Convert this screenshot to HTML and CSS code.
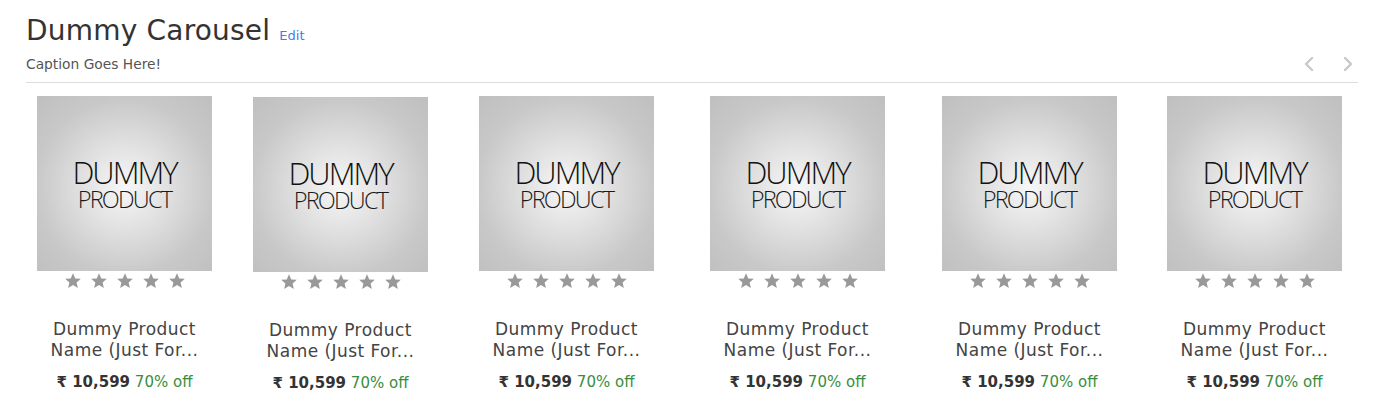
FILE: index.html
```html
<!DOCTYPE html>
<html>
<head>
<meta charset="utf-8">
<link rel="stylesheet" href="styles.css">
</head>
<body>
<section class="carousel">
  <header class="head">
    <div class="titles">
      <h2 class="title">Dummy Carousel <a class="edit" href="#">Edit</a></h2>
      <p class="caption">Caption Goes Here!</p>
    </div>
    <div class="nav">
      <svg class="arrow" viewBox="0 0 12 16" width="12" height="16"><path d="M9 2 L3 8 L9 14" fill="none" stroke="#c8c8c8" stroke-width="2.4" stroke-linecap="round" stroke-linejoin="round"/></svg>
      <svg class="arrow" viewBox="0 0 12 16" width="12" height="16"><path d="M3 2 L9 8 L3 14" fill="none" stroke="#c8c8c8" stroke-width="2.4" stroke-linecap="round" stroke-linejoin="round"/></svg>
    </div>
  </header>
  <div class="track">
    <div class="card">
      <div class="img"><p class="logo">DUMMY PRODUCT</p></div>
      <div class="stars"><svg viewBox="0 0 24 24"><path d="M12 1.5l3 7 7.4.6-5.6 4.9 1.7 7.3L12 17.4l-6.5 3.9 1.7-7.3L1.6 9.1 9 8.5z"/></svg><svg viewBox="0 0 24 24"><path d="M12 1.5l3 7 7.4.6-5.6 4.9 1.7 7.3L12 17.4l-6.5 3.9 1.7-7.3L1.6 9.1 9 8.5z"/></svg><svg viewBox="0 0 24 24"><path d="M12 1.5l3 7 7.4.6-5.6 4.9 1.7 7.3L12 17.4l-6.5 3.9 1.7-7.3L1.6 9.1 9 8.5z"/></svg><svg viewBox="0 0 24 24"><path d="M12 1.5l3 7 7.4.6-5.6 4.9 1.7 7.3L12 17.4l-6.5 3.9 1.7-7.3L1.6 9.1 9 8.5z"/></svg><svg viewBox="0 0 24 24"><path d="M12 1.5l3 7 7.4.6-5.6 4.9 1.7 7.3L12 17.4l-6.5 3.9 1.7-7.3L1.6 9.1 9 8.5z"/></svg></div>
      <p class="name">Dummy Product<br>Name (Just For...</p>
      <p class="price"><b>₹ 10,599</b> <span class="off">70% off</span></p>
    </div>
    <div class="card low">
      <div class="img"><p class="logo">DUMMY PRODUCT</p></div>
      <div class="stars"><svg viewBox="0 0 24 24"><path d="M12 1.5l3 7 7.4.6-5.6 4.9 1.7 7.3L12 17.4l-6.5 3.9 1.7-7.3L1.6 9.1 9 8.5z"/></svg><svg viewBox="0 0 24 24"><path d="M12 1.5l3 7 7.4.6-5.6 4.9 1.7 7.3L12 17.4l-6.5 3.9 1.7-7.3L1.6 9.1 9 8.5z"/></svg><svg viewBox="0 0 24 24"><path d="M12 1.5l3 7 7.4.6-5.6 4.9 1.7 7.3L12 17.4l-6.5 3.9 1.7-7.3L1.6 9.1 9 8.5z"/></svg><svg viewBox="0 0 24 24"><path d="M12 1.5l3 7 7.4.6-5.6 4.9 1.7 7.3L12 17.4l-6.5 3.9 1.7-7.3L1.6 9.1 9 8.5z"/></svg><svg viewBox="0 0 24 24"><path d="M12 1.5l3 7 7.4.6-5.6 4.9 1.7 7.3L12 17.4l-6.5 3.9 1.7-7.3L1.6 9.1 9 8.5z"/></svg></div>
      <p class="name">Dummy Product<br>Name (Just For...</p>
      <p class="price"><b>₹ 10,599</b> <span class="off">70% off</span></p>
    </div>
    <div class="card">
      <div class="img"><p class="logo">DUMMY PRODUCT</p></div>
      <div class="stars"><svg viewBox="0 0 24 24"><path d="M12 1.5l3 7 7.4.6-5.6 4.9 1.7 7.3L12 17.4l-6.5 3.9 1.7-7.3L1.6 9.1 9 8.5z"/></svg><svg viewBox="0 0 24 24"><path d="M12 1.5l3 7 7.4.6-5.6 4.9 1.7 7.3L12 17.4l-6.5 3.9 1.7-7.3L1.6 9.1 9 8.5z"/></svg><svg viewBox="0 0 24 24"><path d="M12 1.5l3 7 7.4.6-5.6 4.9 1.7 7.3L12 17.4l-6.5 3.9 1.7-7.3L1.6 9.1 9 8.5z"/></svg><svg viewBox="0 0 24 24"><path d="M12 1.5l3 7 7.4.6-5.6 4.9 1.7 7.3L12 17.4l-6.5 3.9 1.7-7.3L1.6 9.1 9 8.5z"/></svg><svg viewBox="0 0 24 24"><path d="M12 1.5l3 7 7.4.6-5.6 4.9 1.7 7.3L12 17.4l-6.5 3.9 1.7-7.3L1.6 9.1 9 8.5z"/></svg></div>
      <p class="name">Dummy Product<br>Name (Just For...</p>
      <p class="price"><b>₹ 10,599</b> <span class="off">70% off</span></p>
    </div>
    <div class="card">
      <div class="img"><p class="logo">DUMMY PRODUCT</p></div>
      <div class="stars"><svg viewBox="0 0 24 24"><path d="M12 1.5l3 7 7.4.6-5.6 4.9 1.7 7.3L12 17.4l-6.5 3.9 1.7-7.3L1.6 9.1 9 8.5z"/></svg><svg viewBox="0 0 24 24"><path d="M12 1.5l3 7 7.4.6-5.6 4.9 1.7 7.3L12 17.4l-6.5 3.9 1.7-7.3L1.6 9.1 9 8.5z"/></svg><svg viewBox="0 0 24 24"><path d="M12 1.5l3 7 7.4.6-5.6 4.9 1.7 7.3L12 17.4l-6.5 3.9 1.7-7.3L1.6 9.1 9 8.5z"/></svg><svg viewBox="0 0 24 24"><path d="M12 1.5l3 7 7.4.6-5.6 4.9 1.7 7.3L12 17.4l-6.5 3.9 1.7-7.3L1.6 9.1 9 8.5z"/></svg><svg viewBox="0 0 24 24"><path d="M12 1.5l3 7 7.4.6-5.6 4.9 1.7 7.3L12 17.4l-6.5 3.9 1.7-7.3L1.6 9.1 9 8.5z"/></svg></div>
      <p class="name">Dummy Product<br>Name (Just For...</p>
      <p class="price"><b>₹ 10,599</b> <span class="off">70% off</span></p>
    </div>
    <div class="card">
      <div class="img"><p class="logo">DUMMY PRODUCT</p></div>
      <div class="stars"><svg viewBox="0 0 24 24"><path d="M12 1.5l3 7 7.4.6-5.6 4.9 1.7 7.3L12 17.4l-6.5 3.9 1.7-7.3L1.6 9.1 9 8.5z"/></svg><svg viewBox="0 0 24 24"><path d="M12 1.5l3 7 7.4.6-5.6 4.9 1.7 7.3L12 17.4l-6.5 3.9 1.7-7.3L1.6 9.1 9 8.5z"/></svg><svg viewBox="0 0 24 24"><path d="M12 1.5l3 7 7.4.6-5.6 4.9 1.7 7.3L12 17.4l-6.5 3.9 1.7-7.3L1.6 9.1 9 8.5z"/></svg><svg viewBox="0 0 24 24"><path d="M12 1.5l3 7 7.4.6-5.6 4.9 1.7 7.3L12 17.4l-6.5 3.9 1.7-7.3L1.6 9.1 9 8.5z"/></svg><svg viewBox="0 0 24 24"><path d="M12 1.5l3 7 7.4.6-5.6 4.9 1.7 7.3L12 17.4l-6.5 3.9 1.7-7.3L1.6 9.1 9 8.5z"/></svg></div>
      <p class="name">Dummy Product<br>Name (Just For...</p>
      <p class="price"><b>₹ 10,599</b> <span class="off">70% off</span></p>
    </div>
    <div class="card">
      <div class="img"><p class="logo">DUMMY PRODUCT</p></div>
      <div class="stars"><svg viewBox="0 0 24 24"><path d="M12 1.5l3 7 7.4.6-5.6 4.9 1.7 7.3L12 17.4l-6.5 3.9 1.7-7.3L1.6 9.1 9 8.5z"/></svg><svg viewBox="0 0 24 24"><path d="M12 1.5l3 7 7.4.6-5.6 4.9 1.7 7.3L12 17.4l-6.5 3.9 1.7-7.3L1.6 9.1 9 8.5z"/></svg><svg viewBox="0 0 24 24"><path d="M12 1.5l3 7 7.4.6-5.6 4.9 1.7 7.3L12 17.4l-6.5 3.9 1.7-7.3L1.6 9.1 9 8.5z"/></svg><svg viewBox="0 0 24 24"><path d="M12 1.5l3 7 7.4.6-5.6 4.9 1.7 7.3L12 17.4l-6.5 3.9 1.7-7.3L1.6 9.1 9 8.5z"/></svg><svg viewBox="0 0 24 24"><path d="M12 1.5l3 7 7.4.6-5.6 4.9 1.7 7.3L12 17.4l-6.5 3.9 1.7-7.3L1.6 9.1 9 8.5z"/></svg></div>
      <p class="name">Dummy Product<br>Name (Just For...</p>
      <p class="price"><b>₹ 10,599</b> <span class="off">70% off</span></p>
    </div>
  </div>
</section>
</body>
</html>
```
FILE: styles.css
```css
* { box-sizing: border-box; }
html, body { margin: 0; padding: 0; background: #fff; }
body { font-family: "DejaVu Sans", "Noto Sans", sans-serif; color: #333; }

.carousel { padding: 13px 27px 0 26px; }

.head {
  display: flex;
  justify-content: space-between;
  align-items: flex-end;
  border-bottom: 1px solid #dcdcdc;
  padding-bottom: 9px;
}
.title {
  margin: 0;
  font-weight: 400;
  font-size: 28px;
  line-height: 35px;
  color: #333;
  letter-spacing: 0.2px;
}
.edit {
  font-size: 13px;
  color: #3b7ef0;
  text-decoration: none;
  letter-spacing: 0;
}
.caption {
  margin: 3px 0 0;
  font-size: 13.8px;
  line-height: 17px;
  color: #555;
}
.nav { display: flex; gap: 27px; padding-right: 4px; padding-bottom: 1px; }
.arrow { display: block; }

.track {
  display: grid;
  grid-template-columns: 216px 226px 231px 232px 225px 175px;
  padding: 13px 0 0 11px;
}
.card { width: 175px; display: flex; flex-direction: column; align-items: center; }
.card.low { padding-top: 1px; }

.img {
  width: 175px;
  height: 175px;
  background: radial-gradient(circle at 50% 52%, #f7f7f7 0%, #e2e2e2 32%, #c8c8c8 70%, #bfbfbf 100%);
  display: flex;
  align-items: center;
  justify-content: center;
  padding-top: 2px;
}
.logo {
  margin: 0;
  width: min-content;
  text-align: center;
  font-family: "Open Sans", sans-serif;
  font-weight: 300;
  font-size: 23.5px;
  line-height: 26px;
  letter-spacing: -1.8px;
  color: #1a1a1a;
}
.logo::first-line {
  font-size: 31px;
  line-height: 28px;
  letter-spacing: -2px;
  color: #111;
}

.stars { display: flex; gap: 8px; margin-top: 1px; }
.stars svg { width: 18px; height: 18px; fill: #999; display: block; }

.name {
  margin: 29px 0 0;
  font-size: 17px;
  line-height: 21px;
  letter-spacing: 0.45px;
  color: #444;
  text-align: center;
  white-space: nowrap;
}
.price {
  margin: 11px 0 0;
  font-size: 15px;
  line-height: 20px;
  text-align: center;
  white-space: nowrap;
}
.price b { color: #333; font-weight: 700; }
.off { color: #388e3c; }
```
